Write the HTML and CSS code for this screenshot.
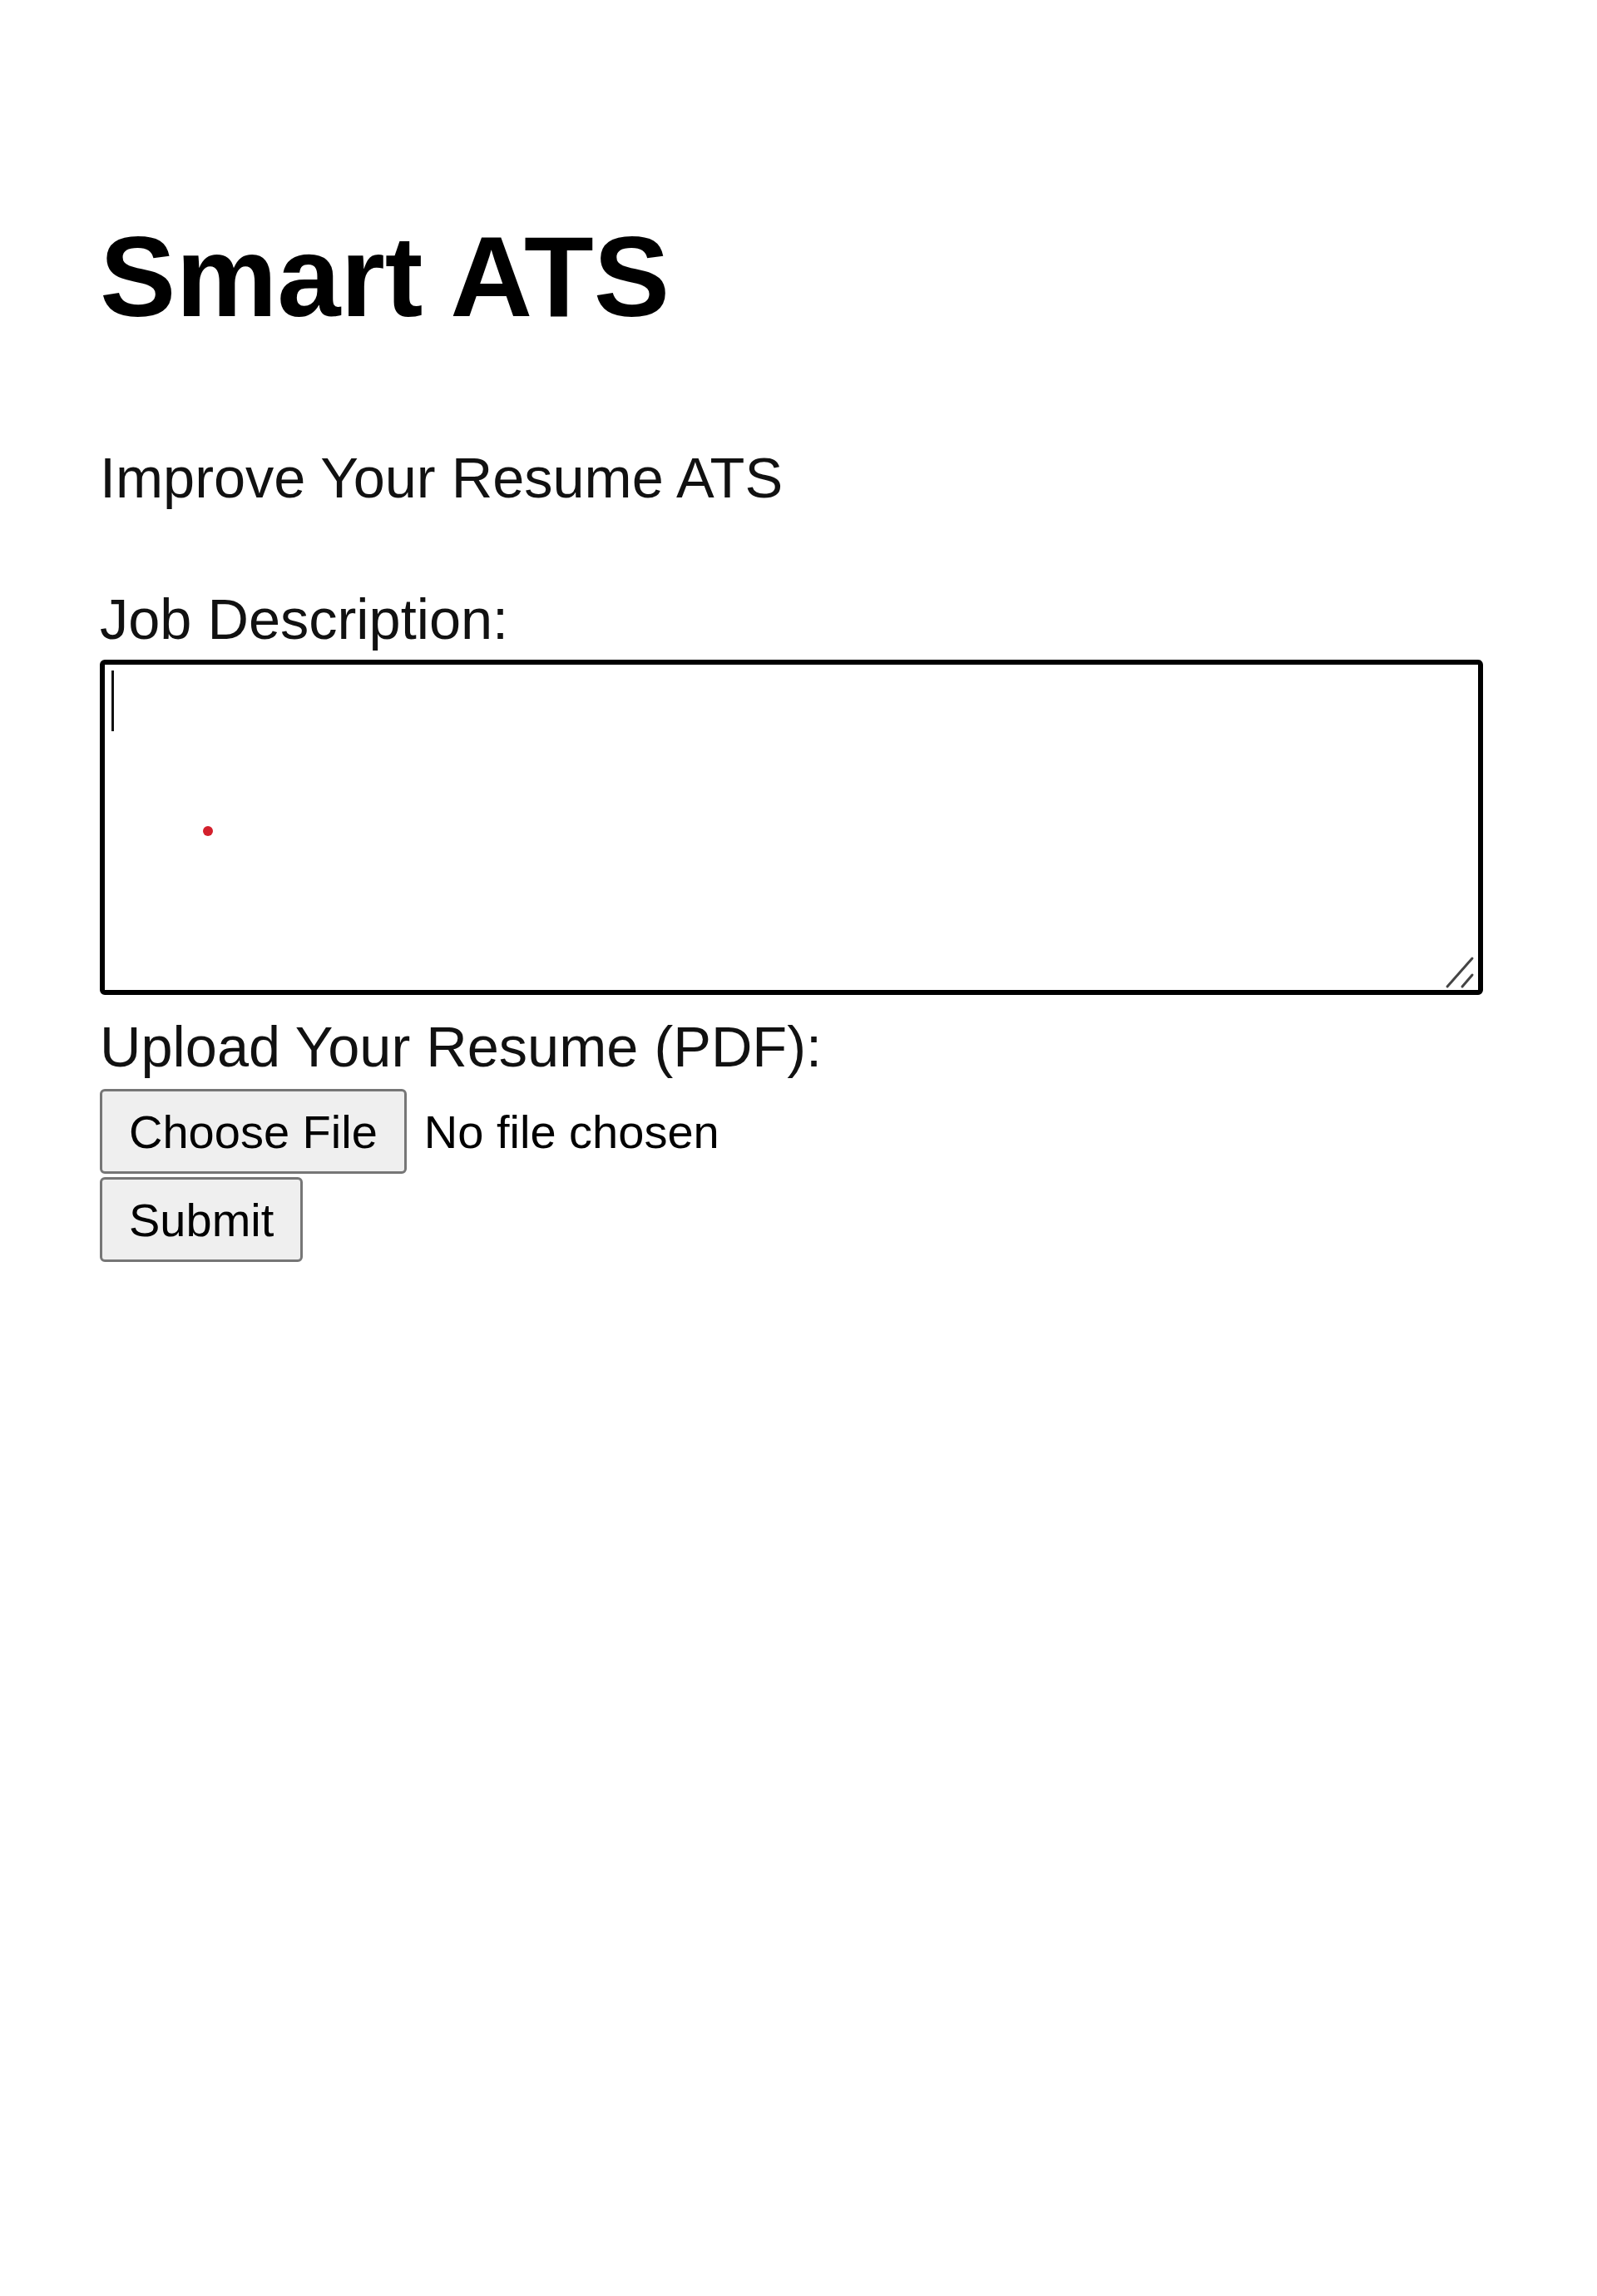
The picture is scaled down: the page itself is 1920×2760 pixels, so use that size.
FILE: index.html
```html
<!DOCTYPE html>
<html lang="en">
<head>
<meta charset="utf-8">
<title>Smart ATS</title>
<link rel="stylesheet" href="styles.css">
</head>
<body>
<main class="page">
  <h1 class="title">Smart ATS</h1>
  <p class="tagline">Improve Your Resume ATS</p>
  <label class="field-label" for="jd">Job Description:</label>
  <div class="jd-box">
    <textarea id="jd" class="jd-input"></textarea>
    <span class="caret"></span>
    <span class="cursor-dot"></span>
    <svg class="grip" width="50" height="50" viewBox="0 0 50 50" aria-hidden="true">
      <line x1="10" y1="43" x2="40" y2="9" />
      <line x1="28" y1="43" x2="40" y2="29" />
    </svg>
  </div>
  <label class="field-label upload-label">Upload Your Resume (PDF):</label>
  <div class="file-row">
    <button type="button" class="btn">Choose File</button>
    <span class="file-status">No file chosen</span>
  </div>
  <div class="submit-row">
    <button type="submit" class="btn">Submit</button>
  </div>
</main>
</body>
</html>
```

FILE: styles.css
```css
html, body {
  margin: 0;
  padding: 0;
  background: #ffffff;
}

body {
  font-family: "Liberation Sans", Arial, sans-serif;
  color: #000000;
}

.page {
  display: flex;
  flex-direction: column;
  align-items: flex-start;
  padding: 255px 0 0 120px;
  width: 1663px;
}

.title {
  margin: 0;
  font-size: 137px;
  font-weight: 700;
  line-height: 155px;
}

.tagline {
  margin: 127px 0 0;
  font-size: 68.5px;
  line-height: 76px;
  color: #111;
}

.field-label {
  display: block;
  margin-top: 94px;
  font-size: 68.5px;
  line-height: 76px;
  color: #111;
}

.upload-label {
  margin-top: 25px;
}

.jd-box {
  position: relative;
  margin-top: 10px;
  width: 1663px;
  height: 403px;
}

.jd-input {
  display: block;
  box-sizing: border-box;
  width: 100%;
  height: 100%;
  margin: 0;
  border: 6px solid #000;
  border-radius: 6px;
  background: #fff;
  resize: none;
  outline: none;
  font-family: "Liberation Sans", Arial, sans-serif;
  font-size: 56px;
}

.caret {
  position: absolute;
  left: 14px;
  top: 13px;
  width: 3px;
  height: 73px;
  background: #111;
}

.cursor-dot {
  position: absolute;
  left: 124px;
  top: 200px;
  width: 12px;
  height: 12px;
  border-radius: 50%;
  background: #d3202c;
}

.grip {
  position: absolute;
  left: 1610px;
  top: 350px;
}

.grip line {
  stroke: #444;
  stroke-width: 3;
  stroke-linecap: round;
}

.file-row {
  display: flex;
  align-items: center;
  gap: 21px;
  margin-top: 12px;
}

.submit-row {
  margin-top: 4px;
}

.btn {
  display: flex;
  align-items: center;
  box-sizing: border-box;
  height: 102px;
  margin: 0;
  padding: 0 32px;
  border: 3px solid #767676;
  border-radius: 6px;
  background: #efefef;
  color: #000;
  font-family: "Liberation Sans", Arial, sans-serif;
  font-size: 56px;
  line-height: normal;
}

.file-status {
  font-size: 56px;
  color: #000;
}
```
